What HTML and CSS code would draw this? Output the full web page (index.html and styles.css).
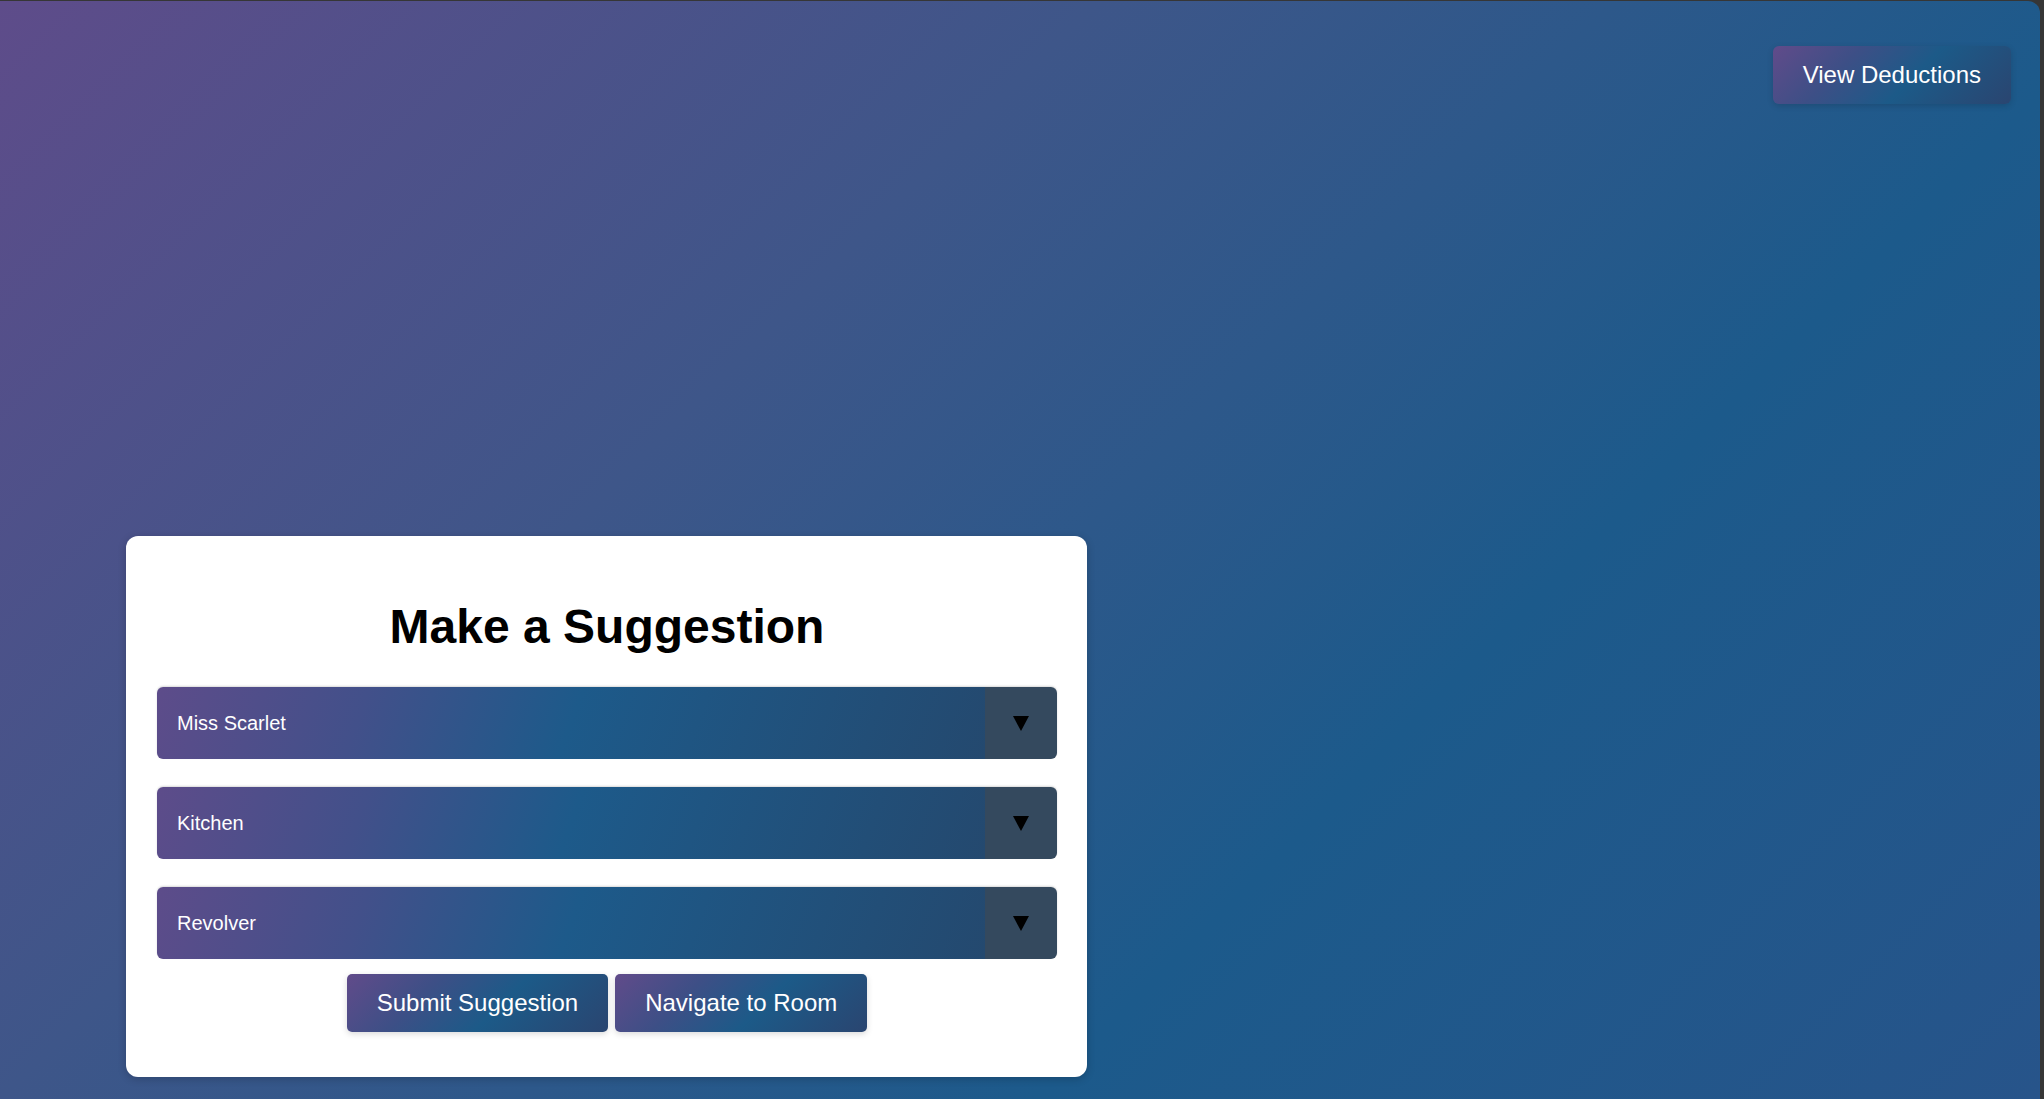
FILE: index.html
```html
<!DOCTYPE html>
<html lang="en">
<head>
<meta charset="utf-8">
<title>Make a Suggestion</title>
<link rel="stylesheet" href="styles.css">
</head>
<body>
  <header class="topbar">
    <button class="btn">View Deductions</button>
  </header>
  <main class="stage">
    <section class="card">
      <h2 class="title">Make a Suggestion</h2>
      <div class="field">
        <select class="select"><option>Miss Scarlet</option></select>
        <span class="arrow"><svg width="16" height="16" viewBox="0 0 16 16"><polygon points="0,1 16,1 8,16" fill="#000"/></svg></span>
      </div>
      <div class="field">
        <select class="select"><option>Kitchen</option></select>
        <span class="arrow"><svg width="16" height="16" viewBox="0 0 16 16"><polygon points="0,1 16,1 8,16" fill="#000"/></svg></span>
      </div>
      <div class="field last">
        <select class="select"><option>Revolver</option></select>
        <span class="arrow"><svg width="16" height="16" viewBox="0 0 16 16"><polygon points="0,1 16,1 8,16" fill="#000"/></svg></span>
      </div>
      <div class="actions">
        <button class="btn">Submit Suggestion</button>
        <button class="btn">Navigate to Room</button>
      </div>
    </section>
  </main>
</body>
</html>
```
FILE: styles.css
```css
html {
  background: #363636;
  height: 100%;
}
body {
  margin: 1px 4px 0 0;
  height: calc(100vh - 1px);
  border-top-right-radius: 12px;
  background: linear-gradient(135deg, #5e4c8a 0%, #3e5689 35%, #1c5a8b 68%, #27548a 100%);
  font-family: "Liberation Sans", Arial, sans-serif;
  display: flex;
  flex-direction: column;
  overflow: hidden;
}
.topbar {
  display: flex;
  justify-content: flex-end;
  padding: 45px 29px 0 0;
}
.btn {
  font-family: "Liberation Sans", Arial, sans-serif;
  font-size: 24px;
  line-height: 28px;
  color: #fff;
  border: none;
  border-radius: 6px;
  padding: 15px 30px;
  background: linear-gradient(135deg, #614b8a 0%, #3d4f86 30%, #1c5a88 58%, #2a4570 100%);
  box-shadow: 0 2px 6px rgba(0, 0, 0, 0.15);
  cursor: pointer;
}
.stage {
  flex: 1;
  display: flex;
  align-items: flex-end;
  padding: 0 0 22px 126px;
}
.card {
  width: 961px;
  box-sizing: border-box;
  background: #fff;
  border-radius: 12px;
  padding: 30px 30px 45px 31px;
  box-shadow: 0 2px 8px rgba(0, 0, 0, 0.2);
}
.title {
  margin: 33px 0 33px;
  text-align: center;
  font-size: 48px;
  font-weight: bold;
  color: #000;
  line-height: 55px;
}
.field {
  display: flex;
  height: 72px;
  border-radius: 6px;
  overflow: hidden;
  margin-bottom: 28px;
  box-shadow: 0 -1px 2px rgba(0, 0, 0, 0.15);
}
.field.last {
  margin-bottom: 15px;
}
.select {
  flex: 1;
  appearance: none;
  -webkit-appearance: none;
  border: none;
  outline: none;
  margin: 0;
  padding: 0 20px;
  font-family: "Liberation Sans", Arial, sans-serif;
  font-size: 20px;
  color: #fff;
  background: linear-gradient(110deg, #5d4c8a 0%, #42508a 25%, #1d5a8a 50%, #24496f 100%);
}
.arrow {
  width: 72px;
  background: #34495e;
  display: flex;
  align-items: center;
  justify-content: center;
}
.actions {
  display: flex;
  justify-content: center;
  gap: 7px;
}
.actions .btn {
  border-radius: 5px;
}
```
